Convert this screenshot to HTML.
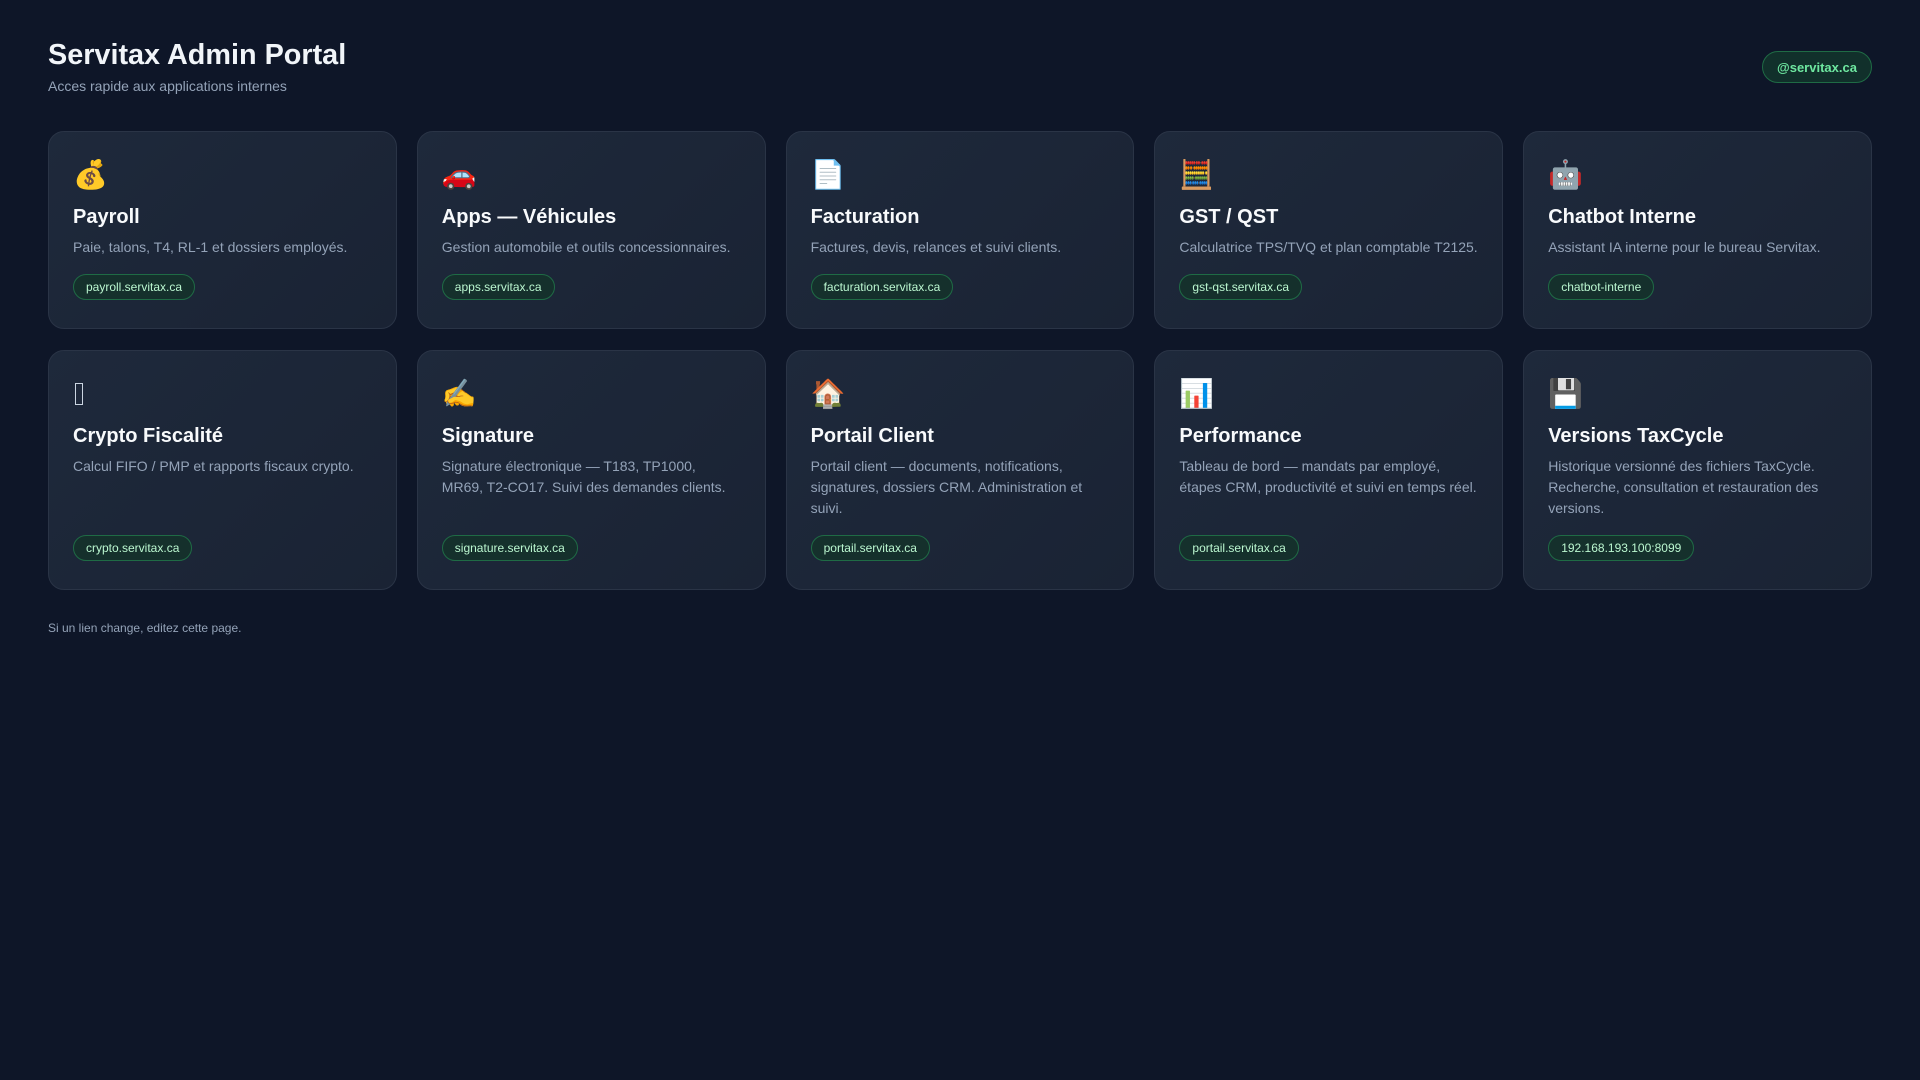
<!DOCTYPE html>
<html><head><meta charset="utf-8"><style>
*{box-sizing:border-box;margin:0;padding:0}
body{width:1920px;height:1080px;background:#0e1628;font-family:"Liberation Sans","Noto Sans CJK JP",sans-serif;color:#e5e7eb;position:relative;overflow:hidden}
h1{position:absolute;left:48px;top:39px;font-size:28.8px;font-weight:700;color:#f1f5f9}
.sub{position:absolute;left:48px;top:78px;font-size:14px;color:#94a3b8}
.badge{position:absolute;left:1762px;top:51px;width:110px;height:32px;border:1px solid #1f6b45;background:#11302b;border-radius:16px;color:#6ee7a0;font-size:13px;font-weight:700;display:flex;align-items:center;justify-content:center}
.grid{position:absolute;left:48px;top:131px;width:1824px;display:grid;grid-template-columns:repeat(5,1fr);grid-template-rows:198px 240px;gap:21px 20px}
.card{background:linear-gradient(135deg,#1e293b,#1a2334);border:1px solid #2a3446;border-radius:16px;padding:25px 24px 28px;display:flex;flex-direction:column;align-items:flex-start}
.ic{font-size:28px;line-height:36px;height:36px;font-family:"Noto Color Emoji","DejaVu Sans",sans-serif}
.t{font-size:20px;font-weight:700;color:#f8fafc;margin-top:12px;line-height:24px}
.d{font-size:14px;color:#94a3b8;line-height:21px;margin-top:8px}
.tag{margin-top:auto;height:26px;padding:0 12px;border:1px solid #1f6b45;background:#15302c;border-radius:13px;font-size:12px;color:#bbf7d0;display:flex;align-items:center}
.foot{position:absolute;left:48px;top:621px;font-size:12px;color:#94a3b8}
.box{display:inline-block;width:8px;height:22px;border:1.5px solid #cbd5e1;margin-top:7px;margin-left:2px}
</style></head><body>
<h1>Servitax Admin Portal</h1>
<div class="sub">Acces rapide aux applications internes</div>
<div class="badge">@servitax.ca</div>
<div class="grid">
<div class="card"><div class="ic">💰</div><div class="t">Payroll</div><div class="d">Paie, talons, T4, RL-1 et dossiers employés.</div><div class="tag">payroll.servitax.ca</div></div>
<div class="card"><div class="ic">🚗</div><div class="t">Apps — Véhicules</div><div class="d">Gestion automobile et outils concessionnaires.</div><div class="tag">apps.servitax.ca</div></div>
<div class="card"><div class="ic">📄</div><div class="t">Facturation</div><div class="d">Factures, devis, relances et suivi clients.</div><div class="tag">facturation.servitax.ca</div></div>
<div class="card"><div class="ic">🧮</div><div class="t">GST / QST</div><div class="d">Calculatrice TPS/TVQ et plan comptable T2125.</div><div class="tag">gst-qst.servitax.ca</div></div>
<div class="card"><div class="ic">🤖</div><div class="t">Chatbot Interne</div><div class="d">Assistant IA interne pour le bureau Servitax.</div><div class="tag">chatbot-interne</div></div>
<div class="card"><div class="ic"><span class="box"></span></div><div class="t">Crypto Fiscalité</div><div class="d">Calcul FIFO / PMP et rapports fiscaux crypto.</div><div class="tag">crypto.servitax.ca</div></div>
<div class="card"><div class="ic">✍️</div><div class="t">Signature</div><div class="d">Signature électronique — T183, TP1000, MR69, T2-CO17. Suivi des demandes clients.</div><div class="tag">signature.servitax.ca</div></div>
<div class="card"><div class="ic">🏠</div><div class="t">Portail Client</div><div class="d">Portail client — documents, notifications, signatures, dossiers CRM. Administration et suivi.</div><div class="tag">portail.servitax.ca</div></div>
<div class="card"><div class="ic">📊</div><div class="t">Performance</div><div class="d">Tableau de bord — mandats par employé, étapes CRM, productivité et suivi en temps réel.</div><div class="tag">portail.servitax.ca</div></div>
<div class="card"><div class="ic">💾</div><div class="t">Versions TaxCycle</div><div class="d">Historique versionné des fichiers TaxCycle. Recherche, consultation et restauration des versions.</div><div class="tag">192.168.193.100:8099</div></div>
</div>
<div class="foot">Si un lien change, editez cette page.</div>
</body></html>
